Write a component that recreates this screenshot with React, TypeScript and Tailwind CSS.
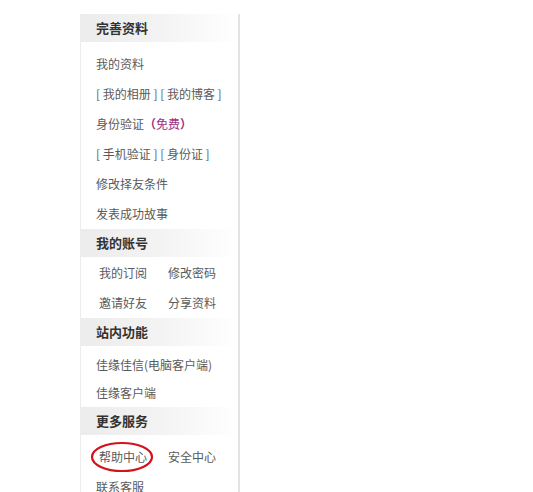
const font = { fontFamily: '"Noto Sans CJK SC", "Noto Sans", sans-serif' }

function Header({ children }: { children: React.ReactNode }) {
  return (
    <div className="flex h-[28px] items-center bg-gradient-to-r from-[#ececec] via-[#f3f3f3] to-white pl-[15px] text-[13px] font-bold text-[#333]">
      {children}
    </div>
  )
}

function Row({ children }: { children: React.ReactNode }) {
  return <div className="flex h-[30px] items-center pl-[15px] text-[12px] text-[#5a5a5a]">{children}</div>
}

function Pair({ a, b, circled }: { a: string; b: string; circled?: boolean }) {
  return (
    <div className="grid h-[30px] grid-cols-[69px_1fr] items-center pl-[18px] text-[12px] text-[#5a5a5a]">
      <span className="relative">
        {a}
        {circled && (
          <svg className="absolute left-[-9px] top-[-7px]" width="64" height="32" viewBox="0 0 64 32">
            <ellipse cx="32" cy="16" rx="30" ry="14" fill="none" stroke="#d3131b" strokeWidth="2.2" />
          </svg>
        )}
      </span>
      <span>{b}</span>
    </div>
  )
}

export default function App() {
  return (
    <div className="h-[492px] w-[533px] overflow-hidden bg-white" style={font}>
      <div className="ml-[80px] mt-[14px] h-[478px] w-[160px] border-l border-r-2 border-l-[#ececec] border-r-[#e3e3e3]">
        <Header>完善资料</Header>
        <div className="pt-[7px]">
          <Row>我的资料</Row>
          <Row>[ 我的相册 ] [ 我的博客 ]</Row>
          <Row>
            身份验证<span className="font-bold text-[#9b2f7f]">（</span>
            <span className="text-[#9b2f7f]">免费</span>
            <span className="font-bold text-[#9b2f7f]">）</span>
          </Row>
          <Row>[ 手机验证 ] [ 身份证 ]</Row>
          <Row>修改择友条件</Row>
          <Row>发表成功故事</Row>
        </div>
        <Header>我的账号</Header>
        <div className="pt-[1px]">
          <Pair a="我的订阅" b="修改密码" />
          <Pair a="邀请好友" b="分享资料" />
        </div>
        <Header>站内功能</Header>
        <div className="pt-[5px]">
          <div className="flex h-[28px] items-center pl-[15px] text-[12px] text-[#5a5a5a]">佳缘佳信(电脑客户端)</div>
          <div className="flex h-[28px] items-center pl-[15px] text-[12px] text-[#5a5a5a]">佳缘客户端</div>
        </div>
        <Header>更多服务</Header>
        <div className="pt-[7px]">
          <Pair a="帮助中心" b="安全中心" circled />
          <Row>联系客服</Row>
        </div>
      </div>
    </div>
  )
}
